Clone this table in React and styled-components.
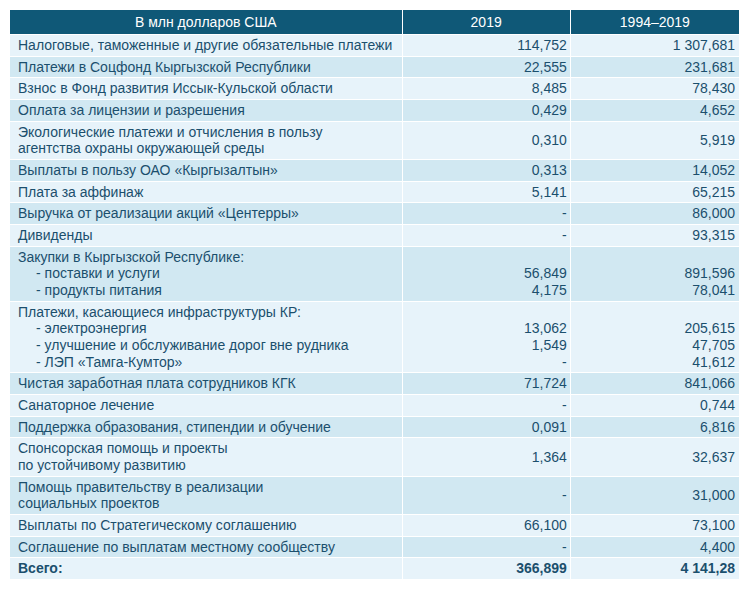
import React from "react";
import styled, { createGlobalStyle } from "styled-components";

const Global = createGlobalStyle`
  html, body { margin: 0; padding: 0; background: #ffffff; }
`;

const Table = styled.table`
  margin: 9px;
  border-collapse: separate;
  border-spacing: 1px;
  table-layout: fixed;
  width: 731px;
  font-family: "Liberation Sans", Arial, sans-serif;
  font-size: 14px;
  color: #1b4f6d;
`;

const HeadCell = styled.th`
  width: ${(p) => p.$w}px;
  background: #0f5877;
  color: #ffffff;
  font-weight: normal;
  text-align: center;
  height: 24px;
  padding: 0;
  line-height: 18px;
  box-sizing: border-box;
`;

const Row = styled.tr`
  background: ${(p) => (p.$dark ? "#d1e8f2" : "#e7f3fa")};
`;

const LabelCell = styled.td`
  padding: 2px 4px 2px 8px;
  line-height: 16.67px;
  vertical-align: top;
  font-weight: ${(p) => (p.$bold ? 700 : 400)};
`;

const NumCell = styled.td`
  padding: 2px ${(p) => p.$pr}px 2px 4px;
  line-height: 16.67px;
  text-align: right;
  vertical-align: ${(p) => p.$valign || "middle"};
  font-weight: ${(p) => (p.$bold ? 700 : 400)};
  white-space: pre-line;
`;

const Line = styled.div`
  padding-left: ${(p) => (p.$sub ? 18 : 0)}px;
  white-space: nowrap;
`;

const rows = [
  { l: ["Налоговые, таможенные и другие обязательные платежи"], a: "114,752", b: "1 307,681" },
  { l: ["Платежи в Соцфонд Кыргызской Республики"], a: "22,555", b: "231,681" },
  { l: ["Взнос в Фонд развития Иссык-Кульской области"], a: "8,485", b: "78,430" },
  { l: ["Оплата за лицензии и разрешения"], a: "0,429", b: "4,652" },
  { l: ["Экологические платежи и отчисления в пользу", "агентства охраны окружающей среды"], a: "0,310", b: "5,919" },
  { l: ["Выплаты в пользу ОАО «Кыргызалтын»"], a: "0,313", b: "14,052" },
  { l: ["Плата за аффинаж"], a: "5,141", b: "65,215" },
  { l: ["Выручка от реализации акций «Центерры»"], a: "-", b: "86,000" },
  { l: ["Дивиденды"], a: "-", b: "93,315" },
  { l: ["Закупки в Кыргызской Республике:", "- поставки и услуги", "- продукты питания"], a: "56,849\n4,175", b: "891,596\n78,041", bottom: true },
  { l: ["Платежи, касающиеся инфраструктуры КР:", "- электроэнергия", "- улучшение и обслуживание дорог вне рудника", "- ЛЭП «Тамга-Кумтор»"], a: "13,062\n1,549\n-", b: "205,615\n47,705\n41,612", bottom: true },
  { l: ["Чистая заработная плата сотрудников КГК"], a: "71,724", b: "841,066" },
  { l: ["Санаторное лечение"], a: "-", b: "0,744" },
  { l: ["Поддержка образования, стипендии и обучение"], a: "0,091", b: "6,816" },
  { l: ["Спонсорская помощь и проекты", "по устойчивому развитию"], a: "1,364", b: "32,637" },
  { l: ["Помощь правительству в реализации", "социальных проектов"], a: "-", b: "31,000" },
  { l: ["Выплаты по Стратегическому соглашению"], a: "66,100", b: "73,100" },
  { l: ["Соглашение по выплатам местному сообществу"], a: "-", b: "4,400" },
  { l: ["Всего:"], a: "366,899", b: "4 141,28", bold: true },
];

export default function App() {
  return (
    <>
      <Global />
      <Table>
        <thead>
          <tr>
            <HeadCell $w={391}>В млн долларов США</HeadCell>
            <HeadCell $w={167}>2019</HeadCell>
            <HeadCell $w={168}>1994–2019</HeadCell>
          </tr>
        </thead>
        <tbody>
          {rows.map((r, i) => (
            <Row key={i} $dark={i % 2 === 1}>
              <LabelCell $bold={r.bold}>
                {r.l.map((t, j) => (
                  <Line key={j} $sub={t.startsWith("- ")}>{t}</Line>
                ))}
              </LabelCell>
              <NumCell $pr={3} $bold={r.bold} $valign={r.bottom ? "bottom" : "middle"}>{r.a}</NumCell>
              <NumCell $pr={4} $bold={r.bold} $valign={r.bottom ? "bottom" : "middle"}>{r.b}</NumCell>
            </Row>
          ))}
        </tbody>
      </Table>
    </>
  );
}
